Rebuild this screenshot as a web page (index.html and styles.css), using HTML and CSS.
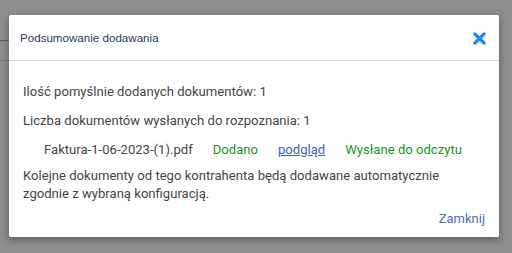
FILE: index.html
```html
<!DOCTYPE html>
<html lang="pl">
<head>
<meta charset="utf-8">
<link rel="stylesheet" href="styles.css">
</head>
<body>
<div class="backdrop">
  <div class="bg-line l1"></div>
  <div class="bg-line l2"></div>
  <div class="dialog">
    <div class="header">
      <span class="title">Podsumowanie dodawania</span>
      <svg class="close" width="13" height="13" viewBox="0 0 13 13"><path d="M2 2 L11 11 M11 2 L2 11" stroke="#1a8cf5" stroke-width="3.4" stroke-linecap="round"/></svg>
    </div>
    <div class="body">
      <p class="line">Ilość pomyślnie dodanych dokumentów: 1</p>
      <p class="line">Liczba dokumentów wysłanych do rozpoznania: 1</p>
      <div class="row">
        <span>Faktura-1-06-2023-(1).pdf</span>
        <span class="green">Dodano</span>
        <a class="link">podgląd</a>
        <span class="green">Wysłane do odczytu</span>
      </div>
      <p class="note">Kolejne dokumenty od tego kontrahenta będą dodawane automatycznie zgodnie z wybraną konfiguracją.</p>
    </div>
    <div class="footer"><a class="btn">Zamknij</a></div>
  </div>
</div>
</body>
</html>
```
FILE: styles.css
```css
html, body { margin: 0; padding: 0; }
body { width: 512px; height: 253px; overflow: hidden; background: #8e8e8e; font-family: Roboto, "Liberation Sans", sans-serif; }
.backdrop { position: relative; width: 512px; height: 253px; padding-top: 15px; padding-left: 9px; box-sizing: border-box; }
.bg-line { position: absolute; left: 0; width: 9px; height: 1px; background: #555; }
.l1 { top: 40px; }
.l2 { top: 60px; background: #6e6e6e; }
.dialog { width: 490px; height: 222px; background: #fff; border-radius: 2px; box-shadow: 0 3px 8px rgba(0,0,0,0.35); display: flex; flex-direction: column; }
.header { flex-shrink: 0; height: 46px; border-bottom: 1px solid #dcdcdc; display: flex; align-items: center; justify-content: space-between; padding: 0 13px 0 11px; box-sizing: border-box; }
.title { font-family: "Liberation Sans", Arial, sans-serif; font-size: 11.6px; color: #2b3a5c; white-space: nowrap; }
.close { margin-top: 1px; }
.body { flex-shrink: 0; padding: 22px 14px 0 14px; color: #444; font-size: 13.1px; line-height: 18px; }
.line { margin: 0 0 11px 0; }
.row { display: flex; gap: 20px; padding-left: 21px; margin: 0 0 8px 0; white-space: nowrap; }
.green { color: #18961c; }
.link { color: #3766b8; text-decoration: underline; }
.note { margin: 0; padding-right: 30px; }
.footer { flex-shrink: 0; display: flex; justify-content: flex-end; padding: 7px 14px 0 0; }
.btn { color: #4a6fb8; font-size: 13px; line-height: 18px; }
```
